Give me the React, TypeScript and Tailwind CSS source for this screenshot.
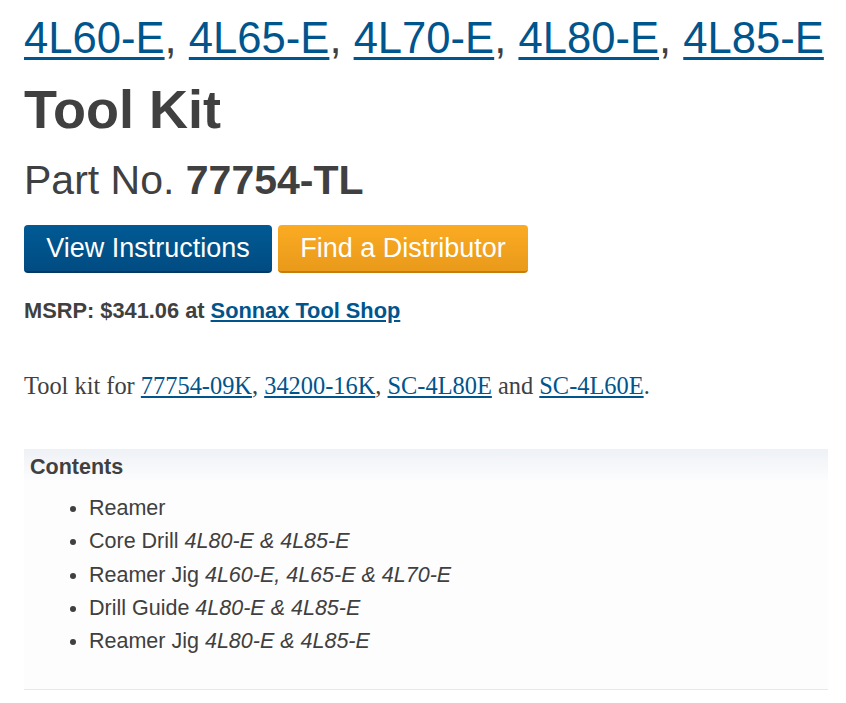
const sans = { fontFamily: '"Liberation Sans", Arial, sans-serif' };

const models = ["4L60-E", "4L65-E", "4L70-E", "4L80-E", "4L85-E"];

const contents: { name: string; fits?: string }[] = [
  { name: "Reamer" },
  { name: "Core Drill", fits: "4L80-E & 4L85-E" },
  { name: "Reamer Jig", fits: "4L60-E, 4L65-E & 4L70-E" },
  { name: "Drill Guide", fits: "4L80-E & 4L85-E" },
  { name: "Reamer Jig", fits: "4L80-E & 4L85-E" },
];

export default function App() {
  return (
    <div className="min-h-[703px] w-[846px] bg-white text-[#404040]" style={sans}>
      <div className="ml-[24px] w-[804px] pt-[13.5px]">
        {/* model links */}
        <div className="text-[43.6px] leading-[48px] whitespace-nowrap">
          {models.map((m, i) => (
            <span key={m}>
              <a href="#" className="text-[#00558c] underline decoration-[3px] underline-offset-[4px]">
                {m}
              </a>
              {i < models.length - 1 && ", "}
            </span>
          ))}
        </div>

        <h1 className="mt-[17.5px] text-[54px] leading-[60px] font-bold">Tool Kit</h1>

        <div className="mt-[17.5px] text-[41px] leading-[46px]">
          Part No. <span className="font-bold">77754-TL</span>
        </div>

        {/* buttons */}
        <div className="mt-[22.5px] flex gap-[6px]">
          <a
            href="#"
            className="flex h-[48px] w-[248px] items-center justify-center rounded-[4px] border-b-2 border-[#003a63] bg-gradient-to-b from-[#005a94] to-[#004c82] text-[27px] leading-[46px] text-white"
          >
            View Instructions
          </a>
          <a
            href="#"
            className="flex h-[48px] w-[250px] items-center justify-center rounded-[4px] border-b-2 border-[#c67d0c] bg-gradient-to-b from-[#fbab22] to-[#e99a1a] text-[27px] leading-[46px] text-white"
          >
            Find a Distributor
          </a>
        </div>

        <div className="mt-[24.4px] text-[21.8px] leading-[28px] font-bold">
          MSRP: $341.06 at{" "}
          <a href="#" className="text-[#00558c] underline">
            Sonnax Tool Shop
          </a>
        </div>

        <p
          className="mt-[45.8px] text-[24.4px] leading-[30px]"
          style={{ fontFamily: '"Liberation Serif", "Times New Roman", serif' }}
        >
          Tool kit for{" "}
          <a href="#" className="text-[#00558c] underline">77754-09K</a>,{" "}
          <a href="#" className="text-[#00558c] underline">34200-16K</a>,{" "}
          <a href="#" className="text-[#00558c] underline">SC-4L80E</a> and{" "}
          <a href="#" className="text-[#00558c] underline">SC-4L60E</a>.
        </p>

        {/* contents box */}
        <div className="mt-[47.8px] border-b border-[#e8e8e8] bg-[#fdfdfe] pb-[31px]">
          <div className="h-[33px] bg-gradient-to-b from-[#eef1f5] to-[#fdfdfe] pl-[6px] pt-[3px] text-[21.5px] leading-[30px] font-bold">
            Contents
          </div>
          <ul className="mt-[10px] list-disc pl-[65px] text-[21.5px] leading-[33.3px]">
            {contents.map((c, i) => (
              <li key={i}>
                {c.name}
                {c.fits && (
                  <>
                    {" "}
                    <em className="pr-[1px]">{c.fits}</em>
                  </>
                )}
              </li>
            ))}
          </ul>
        </div>
      </div>
    </div>
  );
}
